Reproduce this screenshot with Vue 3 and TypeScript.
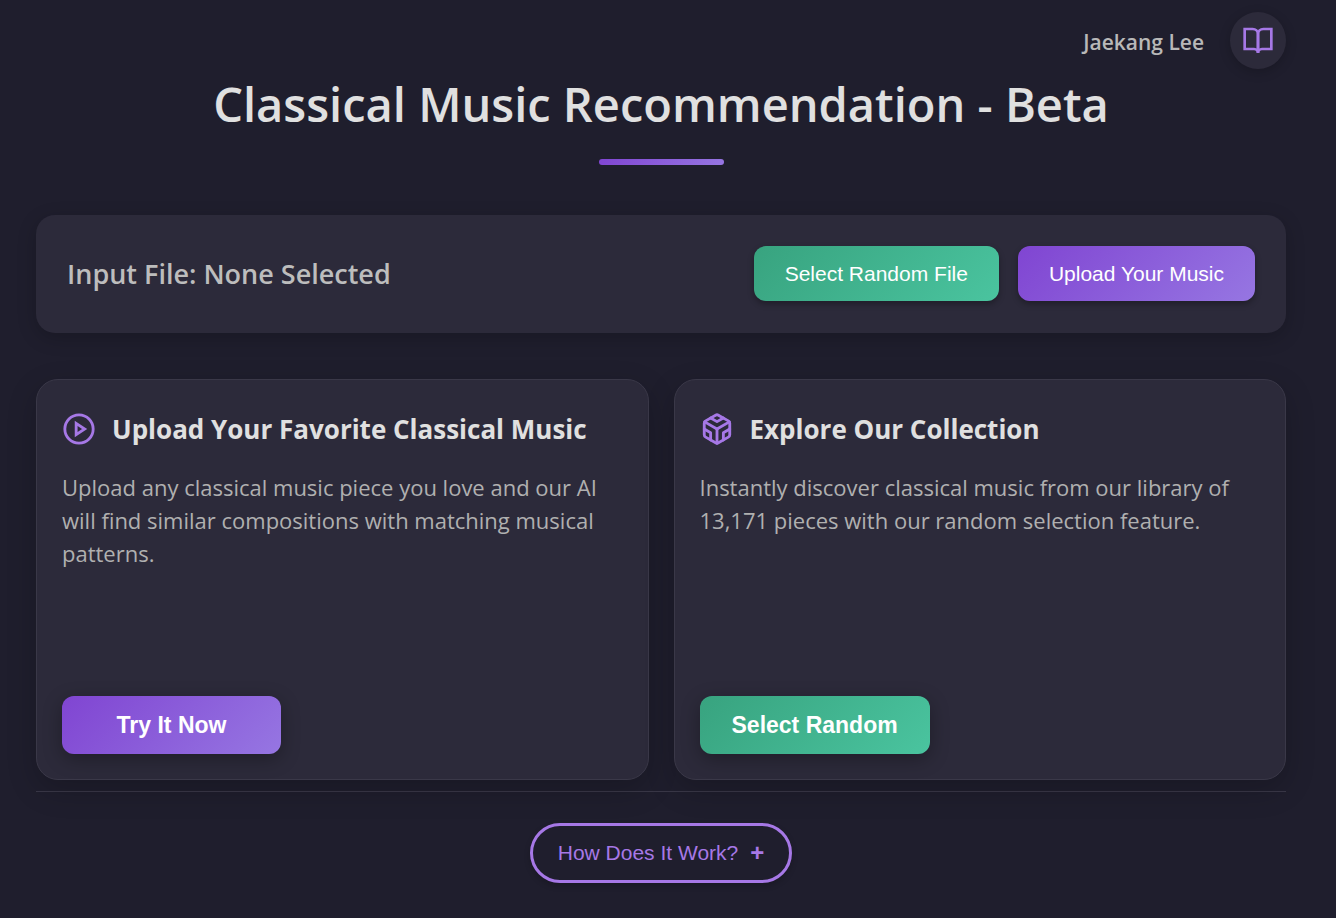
<script setup lang="ts">
import { ref } from 'vue'

interface Feature {
  title: string
  text: string
  action: string
  tone: 'purple' | 'green'
  icon: 'play' | 'cube'
}

const author = 'Jaekang Lee'
const selectedFile = ref<string>('None Selected')

const features: Feature[] = [
  {
    title: 'Upload Your Favorite Classical Music',
    text: 'Upload any classical music piece you love and our AI will find similar compositions with matching musical patterns.',
    action: 'Try It Now',
    tone: 'purple',
    icon: 'play',
  },
  {
    title: 'Explore Our Collection',
    text: 'Instantly discover classical music from our library of 13,171 pieces with our random selection feature.',
    action: 'Select Random',
    tone: 'green',
    icon: 'cube',
  },
]
</script>

<template>
  <div class="page">
    <header class="topbar">
      <span class="author">{{ author }}</span>
      <button class="round" type="button" aria-label="Open guide">
        <svg class="icon-book" viewBox="0 0 24 24" aria-hidden="true">
          <path d="M2 3h6a4 4 0 0 1 4 4v14a3 3 0 0 0-3-3H2z" />
          <path d="M22 3h-6a4 4 0 0 0-4 4v14a3 3 0 0 1 3-3h7z" />
        </svg>
      </button>
    </header>

    <main>
      <h1 class="title">Classical Music Recommendation - Beta</h1>
      <div class="accent"></div>

      <section class="file-bar">
        <p class="file-name">Input File: {{ selectedFile }}</p>
        <div class="file-actions">
          <button class="btn green" type="button">Select Random File</button>
          <button class="btn purple" type="button">Upload Your Music</button>
        </div>
      </section>

      <section class="cards">
        <article v-for="feature in features" :key="feature.title" class="card">
          <h2 class="card-title">
            <svg v-if="feature.icon === 'play'" class="icon-card" viewBox="0 0 24 24" aria-hidden="true">
              <circle cx="12" cy="12" r="10" />
              <polygon points="10 8 16 12 10 16" />
            </svg>
            <svg v-else class="icon-card rounded" viewBox="0 0 24 24" aria-hidden="true">
              <path d="M21 16V8a2 2 0 0 0-1-1.73l-7-4a2 2 0 0 0-2 0l-7 4A2 2 0 0 0 3 8v8a2 2 0 0 0 1 1.73l7 4a2 2 0 0 0 2 0l7-4A2 2 0 0 0 21 16z" />
              <polyline points="7.5 4.21 12 6.81 16.5 4.21" />
              <polyline points="7.5 19.79 7.5 14.6 3 12" />
              <polyline points="21 12 16.5 14.6 16.5 19.79" />
              <polyline points="3.27 6.96 12 12.01 20.73 6.96" />
              <line x1="12" y1="22.08" x2="12" y2="12" />
            </svg>
            <span>{{ feature.title }}</span>
          </h2>
          <p class="card-text">{{ feature.text }}</p>
          <button class="btn large" :class="feature.tone" type="button">{{ feature.action }}</button>
        </article>
      </section>
    </main>

    <footer class="footer">
      <button class="pill" type="button" aria-expanded="false">
        <span>How Does It Work?</span>
        <span class="plus">+</span>
      </button>
    </footer>
  </div>
</template>

<style>
body {
  background: #1f1e2d;
}
</style>

<style scoped>
.page {
  box-sizing: border-box;
  min-height: 100vh;
  padding: 12px 50px 32px 36px;
  color: #e0e0e0;
  font-family: 'Segoe UI', 'Open Sans', 'Noto Sans', sans-serif;
}

button {
  border: 0;
  font-family: 'Liberation Sans', Arial, sans-serif;
  cursor: pointer;
}

svg {
  fill: none;
  stroke: #a678e6;
  stroke-width: 2;
}

.topbar {
  display: flex;
  justify-content: flex-end;
  align-items: center;
  gap: 26px;
}

.author {
  padding-top: 3px;
  color: #b8b8b8;
  font-size: 21px;
  font-weight: 600;
}

.round {
  display: flex;
  justify-content: center;
  align-items: center;
  width: 56px;
  height: 57px;
  padding: 0;
  border-radius: 50%;
  background: #2c2a3a;
  box-shadow: 0 3px 12px rgba(0, 0, 0, 0.2);
}

.icon-book {
  width: 32px;
  height: 32px;
}

.title {
  margin: 0;
  font-size: 47px;
  font-weight: 600;
  line-height: 70px;
  text-align: center;
}

.accent {
  width: 125px;
  height: 6px;
  margin: 20px auto 50px;
  border-radius: 3px;
  background: linear-gradient(135deg, #8045d2, #9676e2);
}

.file-bar {
  display: flex;
  justify-content: space-between;
  align-items: center;
  padding: 31px 31px 32px;
  border-radius: 19px;
  background: #2c2a3a;
  box-shadow: 0 5px 19px rgba(0, 0, 0, 0.2);
}

.file-name {
  margin: 0;
  color: #bdbdbd;
  font-size: 27px;
  font-weight: 600;
}

.file-actions {
  display: flex;
  gap: 19px;
}

.btn {
  height: 55px;
  padding: 0 31px;
  border-radius: 12px;
  color: #ffffff;
  font-size: 21px;
  white-space: nowrap;
  box-shadow: 0 3px 6px rgba(0, 0, 0, 0.3);
}

.purple {
  background: linear-gradient(135deg, #8045d2, #9676e2);
}

.green {
  background: linear-gradient(135deg, #38a37f, #4ac49f);
}

.cards {
  display: grid;
  grid-template-columns: 1fr 1fr;
  gap: 25px;
  margin-top: 46px;
}

.card {
  display: flex;
  flex-direction: column;
  box-sizing: border-box;
  min-height: 401px;
  padding: 25px;
  border: 1px solid #3a3848;
  border-radius: 22px;
  background: #2c2a3a;
  box-shadow: 0 10px 30px rgba(0, 0, 0, 0.2);
}

.card-title {
  display: flex;
  align-items: center;
  gap: 16px;
  margin: 0;
  font-size: 26px;
  font-weight: 700;
  line-height: 48px;
  white-space: nowrap;
}

.icon-card {
  width: 34px;
  height: 34px;
}

.rounded {
  stroke-linecap: round;
  stroke-linejoin: round;
}

.card-text {
  margin: 18px 0 0;
  color: #b0b0b0;
  font-size: 22px;
  line-height: 33px;
}

.btn.large {
  align-self: flex-start;
  min-width: 219px;
  height: 58px;
  margin-top: auto;
  padding: 0 32px;
  font-size: 23px;
  font-weight: 700;
  box-shadow: 0 5px 19px rgba(0, 0, 0, 0.3);
}

.footer {
  display: flex;
  justify-content: center;
  margin-top: 11px;
  padding-top: 31px;
  border-top: 1px solid #3a3848;
}

.pill {
  display: flex;
  align-items: center;
  gap: 12px;
  height: 60px;
  padding: 0 25px;
  border: 3px solid #a678e6;
  border-radius: 30px;
  background: transparent;
  color: #a678e6;
  font-size: 21px;
  box-shadow: 0 3px 6px rgba(0, 0, 0, 0.2);
}

.plus {
  font-size: 24px;
  font-weight: 700;
}
</style>
